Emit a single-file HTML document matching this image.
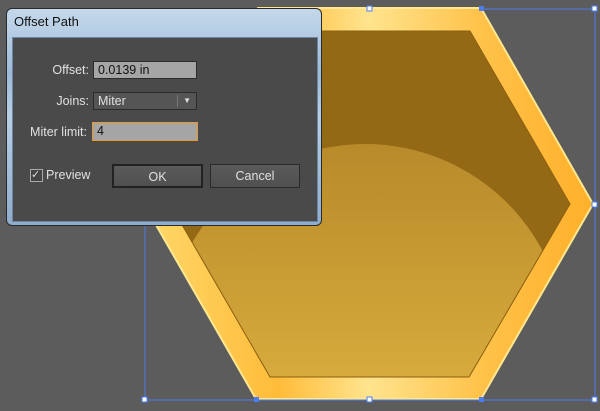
<!DOCTYPE html>
<html style="overflow:hidden;height:411px"><head><style>
body{margin:0;width:600px;height:411px;overflow:hidden;background:#5c5c5c;font-family:"Liberation Sans",sans-serif;position:relative}
svg{display:block}
.dlg{position:absolute;left:6px;top:8px;width:316px;height:218px;border:1px solid #2a2a2a;border-radius:6px;background:linear-gradient(#c4d8ea,#9dbbd9 30%,#b8cfe6 50%,#8eaccc);box-sizing:border-box}
.title{position:absolute;left:7px;top:5px;font-size:13px;color:#111}
.pnl{position:absolute;left:5px;top:28px;width:304px;height:183px;background:#4a4a4a;border:1px solid #6c86a2}
.lbl{position:absolute;font-size:12.5px;color:#e0e0e0;text-align:right;width:76px}
.inp{position:absolute;background:#a5a5a5;border:1px solid #2c2c2c;font-size:12.5px;color:#111;padding-left:4px;box-sizing:border-box;line-height:16px}
.btn{position:absolute;height:24px;box-sizing:border-box;background:linear-gradient(#5a5a5a,#505050);border:1px solid #2a2a2a;color:#e0e0e0;font-size:12.5px;text-align:center;line-height:22px}
</style></head><body>
<svg width="600" height="411" style="position:absolute;left:0;top:0">
<defs>
<linearGradient id="rim" x1="0" x2="1" y1="0" y2="0">
<stop offset="0" stop-color="#ffd86a"/><stop offset="0.3" stop-color="#ffbc3a"/><stop offset="0.5" stop-color="#ffe48e"/><stop offset="0.75" stop-color="#ffc24a"/><stop offset="1" stop-color="#ffb02a"/></linearGradient>
<linearGradient id="cir" x1="0" x2="0" y1="0" y2="1"><stop offset="0" stop-color="#b88a2a"/><stop offset="1" stop-color="#eec24a"/></linearGradient>
<clipPath id="ih"><polygon points="270,31 470,31 570,204 469,377 270,377 170,204"/></clipPath>
</defs>
<polygon points="258,8 481,8 593,204 481,399 256,399 144,204" fill="url(#rim)" stroke="#ffe890" stroke-width="2"/>
<polygon points="270,31 470,31 570,204 469,377 270,377 170,204" fill="#946916"/>
<g clip-path="url(#ih)"><circle cx="365" cy="345" r="201" fill="url(#cir)"/></g>
<polygon points="270,31 470,31 570,204 469,377 270,377 170,204" fill="none" stroke="#8a5e10" stroke-width="1"/>
<polyline points="481,9 595,9 595,400 145,400 145,200" fill="none" stroke="#4d7cf0" stroke-width="1"/>
<g fill="#fff" stroke="#4d7cf0">
<rect x="367" y="6" width="5" height="5"/><rect x="592" y="6" width="5" height="5"/><rect x="592" y="202" width="5" height="5"/><rect x="592" y="397" width="5" height="5"/><rect x="367" y="397" width="5" height="5"/><rect x="142" y="397" width="5" height="5"/>
</g>
<rect x="479" y="6" width="5" height="5" fill="#4d7cf0"/><rect x="479" y="397" width="5" height="5" fill="#4d7cf0"/><rect x="254" y="397" width="5" height="5" fill="#4d7cf0"/>
</svg>
<div class="dlg">
<div class="title">Offset Path</div>
<div class="pnl">
<div class="lbl" style="left:0;top:25px">Offset:</div>
<div class="inp" style="left:80px;top:23px;width:104px;height:18px">0.0139 in</div>
<div class="lbl" style="left:0;top:56px">Joins:</div>
<div class="inp" style="left:80px;top:54px;width:104px;height:18px;background:#555;color:#e0e0e0">Miter<span style="position:absolute;right:18px;top:2px;height:12px;border-left:1px solid #777"></span><span style="position:absolute;right:5px;top:0;font-size:8px;color:#ddd">▼</span></div>
<div class="lbl" style="left:-2px;top:87px">Miter limit:</div>
<div class="inp" style="left:79px;top:84px;width:106px;height:19px;border-color:#e89a30">4</div>
<div style="position:absolute;left:17px;top:131px;width:11px;height:11px;border:1px solid #aaa;background:#444;color:#ddd;font-size:11px;line-height:11px">✓</div>
<div class="lbl" style="left:33px;top:130px;text-align:left">Preview</div>
<div class="btn" style="left:99px;top:126px;width:91px;border:2px solid #222">OK</div>
<div class="btn" style="left:197px;top:126px;width:90px">Cancel</div>
</div>
</div>
</body></html>
